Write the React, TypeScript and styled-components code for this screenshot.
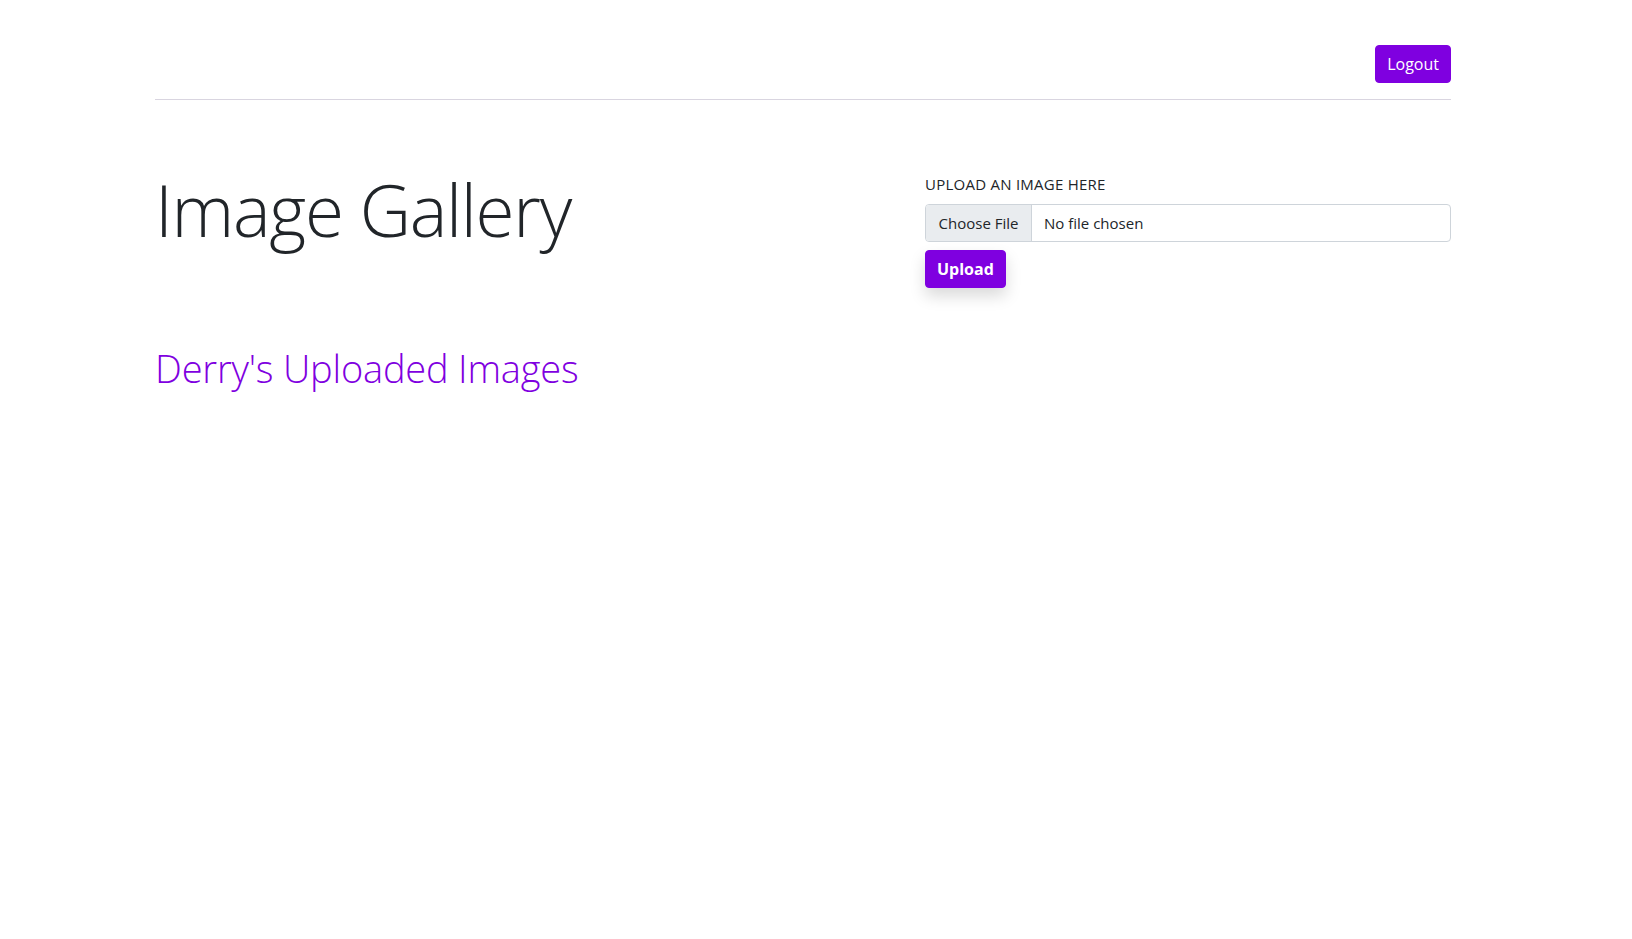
import React from "react";
import styled, { createGlobalStyle } from "styled-components";

const Global = createGlobalStyle`
  html, body { margin: 0; padding: 0; background: #ffffff; }
  body {
    font-family: "Segoe UI", "Open Sans", "Liberation Sans", sans-serif;
    color: #212529;
    font-size: 16px;
  }
  * { box-sizing: border-box; }
`;

const Page = styled.div`
  width: 1296px;
  margin-left: 155px;
`;

const Header = styled.header`
  display: flex;
  justify-content: flex-end;
  padding-top: 45px;
  padding-bottom: 16px;
  border-bottom: 1px solid #d9d5e0;
`;

const PurpleButton = styled.button<{ $bold?: boolean; $shadow?: boolean }>`
  font-family: inherit;
  font-size: 16px;
  font-weight: ${(p) => (p.$bold ? 700 : 400)};
  line-height: 24px;
  color: #ffffff;
  background: #7f00e0;
  border: 1px solid #7f00e0;
  border-radius: 4px;
  padding: 6px 11px;
  cursor: pointer;
  box-shadow: ${(p) => (p.$shadow ? "0 8px 16px rgba(0,0,0,0.15)" : "none")};
`;

const Hero = styled.section`
  display: flex;
  justify-content: space-between;
  align-items: flex-start;
  padding-top: 64px;
`;

const Title = styled.h1`
  margin: 0;
  padding-top: 3px;
  font-size: 71px;
  font-weight: 300;
  line-height: 1.2;
  letter-spacing: -1.3px;
`;

const UploadForm = styled.form`
  width: 526px;
  display: flex;
  flex-direction: column;
  align-items: flex-start;
  padding-top: 8px;
`;

const Label = styled.label`
  font-size: 15px;
  line-height: 24px;
  font-weight: 400;
  letter-spacing: 0.25px;
  margin-bottom: 8px;
`;

const FileBox = styled.div`
  width: 100%;
  height: 38px;
  display: flex;
  border: 1px solid #ced4da;
  border-radius: 4px;
  overflow: hidden;
  margin-bottom: 8px;
`;

const ChooseButton = styled.span`
  width: 106px;
  display: flex;
  align-items: center;
  justify-content: center;
  background: #e9ecef;
  border-right: 1px solid #ced4da;
  font-size: 15px;
`;

const FileName = styled.span`
  display: flex;
  align-items: center;
  padding-left: 12px;
  font-size: 15px;
`;

const SubTitle = styled.h2`
  margin: 58px 0 0;
  font-size: 38px;
  font-weight: 300;
  line-height: 1.2;
  color: #7f00e0;
  letter-spacing: -0.2px;
`;

export default function App() {
  return (
    <>
      <Global />
      <Page>
        <Header>
          <PurpleButton type="button">Logout</PurpleButton>
        </Header>
        <Hero>
          <Title>Image Gallery</Title>
          <UploadForm onSubmit={(e) => e.preventDefault()}>
            <Label>UPLOAD AN IMAGE HERE</Label>
            <FileBox>
              <ChooseButton>Choose File</ChooseButton>
              <FileName>No file chosen</FileName>
            </FileBox>
            <PurpleButton type="submit" $bold $shadow>
              Upload
            </PurpleButton>
          </UploadForm>
        </Hero>
        <SubTitle>Derry's Uploaded Images</SubTitle>
      </Page>
    </>
  );
}
